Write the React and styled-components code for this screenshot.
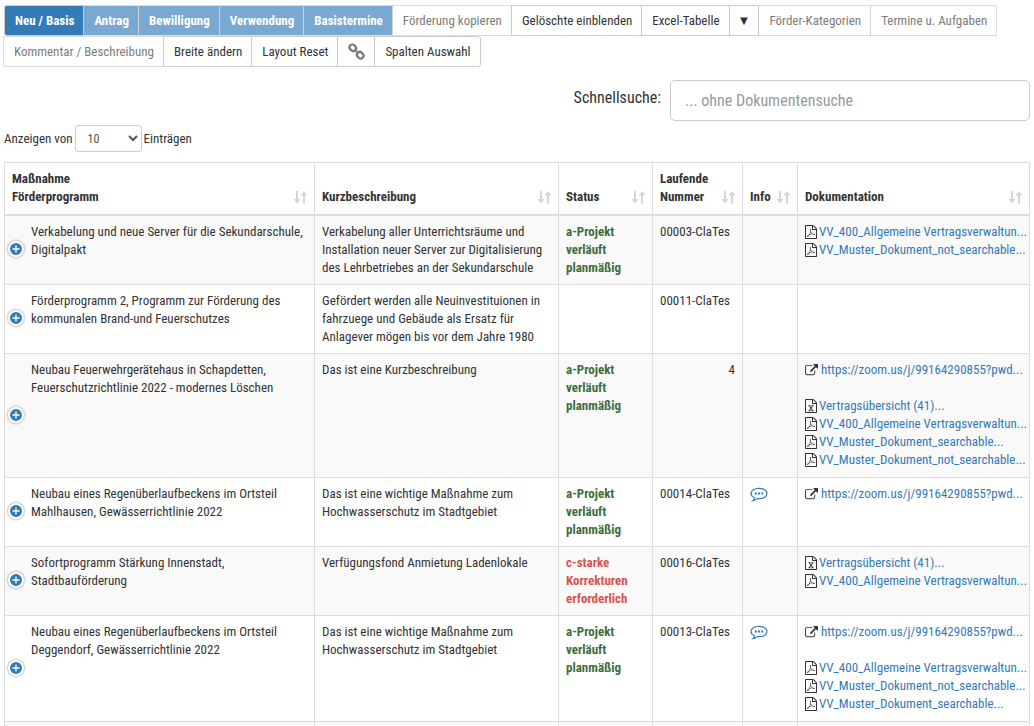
import React from 'react'
import styled, { createGlobalStyle, css } from 'styled-components'

const GlobalStyle = createGlobalStyle`
    *, *::before, *::after {
        box-sizing: border-box;
    }
    body {
        margin: 0;
        background: #fff;
        color: #333;
        font-family: "Roboto Condensed", "Liberation Sans Narrow", Roboto, sans-serif;
        font-size: 13px;
        line-height: 18px;
    }
    button, input, select {
        font-family: inherit;
    }
`

const Page = styled.main`
    padding: 5px 4px 0;
`

const Toolbar = styled.div`
    display: flex;
    flex-wrap: wrap;
`

const ToolButton = styled.button`
    display: flex;
    align-items: center;
    justify-content: center;
    height: 31px;
    padding: ${ props => props.$narrow ? '0 8px' : '0 9px 0 10px' };
    margin-left: -1px;
    border: 1px solid #ccc;
    background: #fff;
    color: #333;
    font-size: 13px;
    line-height: 18px;
    white-space: nowrap;

    &:first-child {
        margin-left: 0;
        border-radius: 3px 0 0 3px;
    }
    &:last-child {
        border-radius: 0 3px 3px 0;
    }
    &:disabled {
        opacity: 0.65;
    }
    ${ props => props.$primary && css`
        background: #337ab7;
        color: #fff;
        font-weight: bold;
    ` }
`

const SearchRow = styled.div`
    display: flex;
    justify-content: flex-end;
    align-items: center;
    gap: 9px;
    margin-top: 13px;
`

const SearchLabel = styled.label`
    margin-bottom: 5px;
    font-size: 16px;
`

const SearchInput = styled.input`
    width: 360px;
    height: 41px;
    padding: 0 14px;
    border: 1px solid #ccc;
    border-radius: 5px;
    color: #555;
    font-size: 16px;

    &::placeholder {
        color: #999;
    }
`

const LengthRow = styled.div`
    display: flex;
    align-items: center;
    gap: 2px;
    margin: 4px 0 10px;
`

const LengthSelect = styled.select`
    width: 67px;
    height: 27px;
    padding: 0 8px;
    border: 1px solid #ccc;
    border-radius: 3px;
    background: #fff;
    color: #555;
    font-size: 12px;
`

const DataTable = styled.table`
    width: 100%;
    table-layout: fixed;
    border-collapse: collapse;
`

const Col = styled.col`
    width: ${ props => props.$width || 'auto' };
`

const HeadCell = styled.th`
    padding: 7px 7px 8px;
    border: 1px solid #ddd;
    border-bottom-width: 2px;
    text-align: left;
    vertical-align: bottom;
`

const HeadContent = styled.div`
    display: flex;
    justify-content: space-between;
    align-items: flex-end;
`

const Row = styled.tr`
    background: ${ props => props.$odd ? '#f9f9f9' : '#fff' };
`

const Cell = styled.td`
    height: 1px;
    padding: 7px;
    border: 1px solid #ddd;
    text-align: ${ props => props.$align || 'left' };
    vertical-align: top;
`

const ProjectCell = styled(Cell)`
    padding-left: 3px;
`

const Project = styled.div`
    display: flex;
    gap: 7px;
    height: 100%;
`

const ExpandButton = styled.button`
    display: flex;
    flex: none;
    align-self: center;
    align-items: center;
    justify-content: center;
    width: 16px;
    height: 16px;
    padding: 0;
    margin-bottom: 2px;
    border: 2px solid #fff;
    border-radius: 50%;
    background: #337ab7;
    box-shadow: 0 0 3px #888;
`

const Status = styled.strong`
    color: ${ props => props.$critical ? '#d9534f' : '#3c6e3d' };
`

const DocList = styled.div`
    padding-bottom: ${ props => props.$grouped ? '1px' : '0' };
`

const Doc = styled.a`
    display: flex;
    align-items: center;
    gap: ${ props => props.$external ? '3px' : '2px' };
    height: 18px;
    margin-bottom: ${ props => props.$spaced ? '18px' : '0' };
    color: #337ab7;
    text-decoration: none;
    white-space: nowrap;
`

const InfoButton = styled.button`
    display: block;
    padding: 0;
    border: 0;
    background: none;
`

const Icon = styled.svg`
    display: block;
    flex: none;
    width: ${ props => props.$w }px;
    height: ${ props => props.$h }px;
    color: ${ props => props.$color || '#333' };
`

const FILE_FRAME = 'M1468 380q28 28 48 76t20 88v1152q0 40-28 68t-68 28h-1344q-40 0-68-28t-28-68v-1600q0-40 28-68t68-28h896q40 0 88 20t76 48zm-444-244v376h376q-10-29-22-41l-313-313q-12-12-41-22zm384 1528v-1024h-416q-40 0-68-28t-28-68v-416h-768v1536h1280z'

const PDF_SIGN = 'M894 1071q33 26 84 56 59-7 117-7 147 0 177 49 16 22 2 52 0 1-1 2l-2 2v1q-6 38-71 38-48 0-115-20t-130-53q-221 24-392 83-153 262-242 262-15 0-28-7l-24-12q-1-1-6-5-10-10-6-36 9-40 56-91.500t132-96.500q14-9 23 6 2 2 2 4 52-85 107-197 68-136 104-262-24-82-30.500-159.500t6.500-127.500q11-40 42-40h22q23 0 35 15 18 21 9 68-2 6-4 8 1 3 1 8v30q-2 123-14 192 55 164 146 238zm-576 411q52-24 137-158-51 40-87.500 84t-49.500 74zm398-920q-15 42-2 132 1-7 7-44 0-3 7-43 1-4 4-8-1-1-1-2-1-2-1-3-1-22-13-36 0 1-1 2v2zm-124 661q135-54 284-81-2-1-13-9.500t-16-13.500q-76-67-127-176-27 86-83 197-30 56-45 83zm646-16q-24-24-140-24 76 28 124 28 14 0 18-1 0-1-2-3z'

const EXCEL_SIGN = 'M429 1461v107h281v-107h-75l103-161q5-7 10-16.500t7.500-13.500 3.500-4h2q1 4 5 10 2 4 4.500 7.500t6 8 6.500 8.500l107 161h-76v107h291v-107h-68l-192-273 195-282h67v-107h-279v107h74l-103 159q-4 7-10 16.500t-9 13.500l-2 3h-2q-1-4-5-10-6-11-17-23l-106-159h76v-107h-290v107h68l189 272-194 283h-68z'

const EXTERNAL = 'M1408 928v320q0 119-84.500 203.500t-203.500 84.500h-832q-119 0-203.500-84.500t-84.500-203.500v-832q0-119 84.500-203.500t203.500-84.500h704q14 0 23 9t9 23v64q0 14-9 23t-23 9h-704q-66 0-113 47t-47 113v832q0 66 47 113t113 47h832q66 0 113-47t47-113v-320q0-14 9-23t23-9h64q14 0 23 9t9 23zm384-864v512q0 26-19 45t-45 19-45-19l-176-176-652 652q-10 10-23 10t-23-10l-114-114q-10-10-10-23t10-23l652-652-176-176q-19-19-19-45t19-45 45-19h512q26 0 45 19t19 45z'

const IconFile = ({ sign }) => (
    <Icon $w={12} $h={14} viewBox="0 0 1536 1792" fill="currentColor" aria-hidden="true">
        <path d={FILE_FRAME} />
        <path d={sign} />
    </Icon>
)

const IconExternal = () => (
    <Icon $w={13} $h={13} viewBox="0 0 1792 1792" fill="currentColor" aria-hidden="true">
        <path d={EXTERNAL} />
    </Icon>
)

const IconSort = () => (
    <Icon $w={13} $h={18} $color="#d6d6d6" viewBox="0 0 13 18" fill="currentColor" aria-hidden="true">
        <path d="M2 3h2v8h2.500l-3.500 4.500l-3.500-4.500h2.500z" />
        <path d="M9 15.500h2v-8h2.500l-3.500-4.500l-3.500 4.500h2.500z" />
    </Icon>
)

const IconChain = () => (
    <Icon $w={17} $h={17} $color="#777" viewBox="0 0 17 17" fill="none" stroke="currentColor" strokeWidth="2.200" aria-hidden="true">
        <rect x="1.300" y="2" width="7" height="5.600" rx="2.800" transform="rotate(45 4.800 4.800)" />
        <rect x="8.700" y="9.400" width="7" height="5.600" rx="2.800" transform="rotate(45 12.200 12.200)" />
        <path d="M6.500 6.500l4 4" strokeWidth="1.600" />
    </Icon>
)

const IconComment = () => (
    <Icon $w={18} $h={18} $color="#337ab7" viewBox="0 0 18 18" fill="none" stroke="currentColor" strokeWidth="1.200" aria-hidden="true">
        <path d="M4.500 12.700C2.200 11.700 1 10.200 1 8.500C1 5.600 4.500 3.300 9 3.300S17 5.600 17 8.500S13.500 13.700 9 13.700C8.400 13.700 7.900 13.700 7.400 13.600C6.100 14.800 4.600 15.500 2.900 15.700C3.900 14.800 4.400 13.900 4.500 12.700Z" />
        <path d="M4.800 8.500h2M8 8.500h2M11.200 8.500h2" strokeWidth="2" />
    </Icon>
)

const IconPlus = () => (
    <Icon $w={10} $h={10} $color="#fff" viewBox="0 0 10 10" fill="none" stroke="currentColor" aria-hidden="true">
        <path d="M5 1.500v7M1.500 5h7" strokeWidth="1.300" />
    </Icon>
)

const BUTTONS = [
    { text: 'Neu / Basis', primary: true },
    { text: 'Antrag', primary: true, disabled: true },
    { text: 'Bewilligung', primary: true, disabled: true },
    { text: 'Verwendung', primary: true, disabled: true },
    { text: 'Basistermine', primary: true, disabled: true },
    { text: 'Förderung kopieren', disabled: true },
    { text: 'Gelöschte einblenden' },
    { text: 'Excel-Tabelle' },
    { text: '▼', narrow: true },
    { text: 'Förder-Kategorien', disabled: true },
    { text: 'Termine u. Aufgaben', disabled: true },
    { text: 'Kommentar / Beschreibung', disabled: true },
    { text: 'Breite ändern' },
    { text: 'Layout Reset' },
    { icon: <IconChain />, label: 'Link' },
    { text: 'Spalten Auswahl' }
]

const COLUMNS = [
    { title: <>Maßnahme<br />Förderprogramm</> },
    { title: 'Kurzbeschreibung', width: '244px' },
    { title: 'Status', width: '94px' },
    { title: <>Laufende<br />Nummer</>, width: '90px' },
    { title: 'Info', width: '55px' },
    { title: 'Dokumentation', width: '232px' }
]

const zoomLink = { type: 'link', text: 'https://zoom.us/j/99164290855?pwd...' }
const contract = { type: 'excel', text: 'Vertragsübersicht (41)...' }
const general = { type: 'pdf', text: 'VV_400_Allgemeine Vertragsverwaltun...' }
const searchable = { type: 'pdf', text: 'VV_Muster_Dokument_searchable...' }
const notSearchable = { type: 'pdf', text: 'VV_Muster_Dokument_not_searchable...' }

const OK = ['a-Projekt', 'verläuft', 'planmäßig']
const CRITICAL = ['c-starke', 'Korrekturen', 'erforderlich']

const ROWS = [
    {
        project: ['Verkabelung und neue Server für die Sekundarschule,', 'Digitalpakt'],
        text: ['Verkabelung aller Unterrichtsräume und', 'Installation neuer Server zur Digitalisierung', 'des Lehrbetriebes an der Sekundarschule'],
        status: OK,
        number: '00003-ClaTes',
        docs: [general, notSearchable]
    },
    {
        project: ['Förderprogramm 2, Programm zur Förderung des', 'kommunalen Brand-und Feuerschutzes'],
        text: ['Gefördert werden alle Neuinvestituionen in', 'fahrzuege und Gebäude als Ersatz für', 'Anlagever mögen bis vor dem Jahre 1980'],
        number: '00011-ClaTes'
    },
    {
        project: ['Neubau Feuerwehrgerätehaus in Schapdetten,', 'Feuerschutzrichtlinie 2022 - modernes Löschen'],
        text: ['Das ist eine Kurzbeschreibung'],
        status: OK,
        number: '4',
        numeric: true,
        docs: [zoomLink, contract, general, searchable, notSearchable]
    },
    {
        project: ['Neubau eines Regenüberlaufbeckens im Ortsteil', 'Mahlhausen, Gewässerrichtlinie 2022'],
        text: ['Das ist eine wichtige Maßnahme zum', 'Hochwasserschutz im Stadtgebiet'],
        status: OK,
        number: '00014-ClaTes',
        info: true,
        docs: [zoomLink]
    },
    {
        project: ['Sofortprogramm Stärkung Innenstadt,', 'Stadtbauförderung'],
        text: ['Verfügungsfond Anmietung Ladenlokale'],
        status: CRITICAL,
        number: '00016-ClaTes',
        docs: [contract, general]
    },
    {
        project: ['Neubau eines Regenüberlaufbeckens im Ortsteil', 'Deggendorf, Gewässerrichtlinie 2022'],
        text: ['Das ist eine wichtige Maßnahme zum', 'Hochwasserschutz im Stadtgebiet'],
        status: OK,
        number: '00013-ClaTes',
        info: true,
        docs: [zoomLink, general, notSearchable, searchable]
    }
]

const Lines = ({ lines = [] }) => lines.map((line, i) => (
    <React.Fragment key={line}>
        {i > 0 && <br />}
        {line}
    </React.Fragment>
))

const Documents = ({ docs = [] }) => {
    // a meeting link is set apart from the files below it
    const grouped = docs.length > 1 && docs[0].type === 'link'

    return (
        <DocList $grouped={grouped}>
            {docs.map(doc => (
                <Doc
                    key={doc.text}
                    href="#"
                    $external={doc.type === 'link'}
                    $spaced={grouped && doc.type === 'link'}
                >
                    {doc.type === 'link'
                        ? <IconExternal />
                        : <IconFile sign={doc.type === 'pdf' ? PDF_SIGN : EXCEL_SIGN} />}
                    <span>{doc.text}</span>
                </Doc>
            ))}
        </DocList>
    )
}

const ProjectRow = ({ row, odd }) => (
    <Row $odd={odd}>
        <ProjectCell>
            <Project>
                <ExpandButton type="button" aria-label="Details"><IconPlus /></ExpandButton>
                <div><Lines lines={row.project} /></div>
            </Project>
        </ProjectCell>
        <Cell><Lines lines={row.text} /></Cell>
        <Cell>
            <Status $critical={row.status === CRITICAL}><Lines lines={row.status} /></Status>
        </Cell>
        <Cell $align={row.numeric ? 'right' : 'left'}>{row.number}</Cell>
        <Cell>
            {row.info && <InfoButton type="button" aria-label="Info"><IconComment /></InfoButton>}
        </Cell>
        <Cell><Documents docs={row.docs} /></Cell>
    </Row>
)

const App = () => (
    <>
        <GlobalStyle />
        <Page>
            <Toolbar>
                {BUTTONS.map(button => (
                    <ToolButton
                        key={button.text || button.label}
                        type="button"
                        disabled={button.disabled}
                        aria-label={button.label}
                        $primary={button.primary}
                        $narrow={button.narrow}
                    >
                        {button.icon || button.text}
                    </ToolButton>
                ))}
            </Toolbar>

            <SearchRow>
                <SearchLabel htmlFor="search">Schnellsuche:</SearchLabel>
                <SearchInput id="search" type="search" placeholder="... ohne Dokumentensuche" />
            </SearchRow>

            <LengthRow>
                <label htmlFor="length">Anzeigen von</label>
                <LengthSelect id="length" defaultValue="10">
                    <option>10</option>
                    <option>25</option>
                    <option>50</option>
                </LengthSelect>
                <span>Einträgen</span>
            </LengthRow>

            <DataTable>
                <colgroup>
                    {COLUMNS.map((column, i) => <Col key={i} $width={column.width} />)}
                </colgroup>
                <thead>
                    <tr>
                        {COLUMNS.map((column, i) => (
                            <HeadCell key={i} scope="col">
                                <HeadContent>
                                    <span>{column.title}</span>
                                    <IconSort />
                                </HeadContent>
                            </HeadCell>
                        ))}
                    </tr>
                </thead>
                <tbody>
                    {ROWS.map((row, i) => (
                        <ProjectRow key={row.number} row={row} odd={i % 2 === 0} />
                    ))}
                    <Row $odd>
                        {COLUMNS.map((column, i) => <Cell key={i} />)}
                    </Row>
                </tbody>
            </DataTable>
        </Page>
    </>
)

export default App
